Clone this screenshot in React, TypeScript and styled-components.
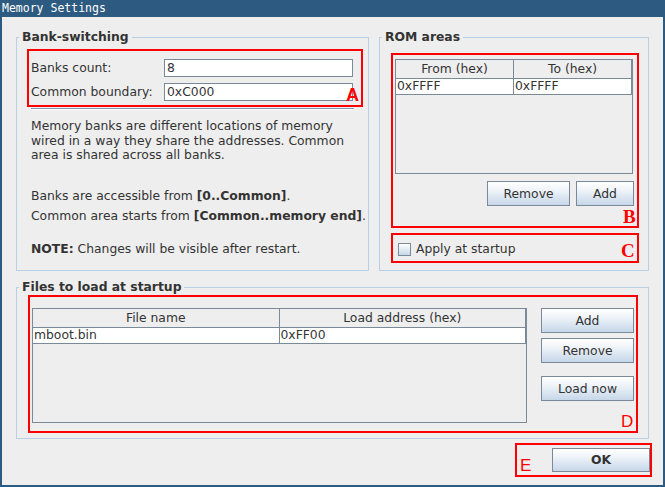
import React from "react";
import styled, { createGlobalStyle } from "styled-components";

const FRAME = "#2c5a80";
const LINE = "#7a8a99";
const GROUP = "#b8cfe5";
const TEXT = "#333333";
const MARK = "#ff0000";
const FS = "12.35px";

const Global = createGlobalStyle`
  html, body { margin: 0; padding: 0; background: #eeeeee; }
  body { font-family: "DejaVu Sans", sans-serif; }
  *, *::before, *::after { box-sizing: border-box; }
`;

const Window = styled.div`
  width: 665px;
  height: 487px;
  display: flex;
  flex-direction: column;
  background: ${FRAME};
  padding: 0 2px 2px 2px;
`;

const TitleBar = styled.div`
  height: 17px;
  line-height: 17px;
  font-family: "DejaVu Sans Mono", monospace;
  font-size: 11.5px;
  color: #ffffff;
  white-space: nowrap;
`;

const Content = styled.div`
  flex: 1;
  background: #eeeeee;
  padding: 13px 11px 0 14px;
  display: flex;
  flex-direction: column;
  font-family: "DejaVu Sans", sans-serif;
  font-size: ${FS};
  color: ${TEXT};
`;

const TopRow = styled.div`
  display: grid;
  grid-template-columns: 353px 270px;
  grid-template-rows: 241px;
  column-gap: 10px;
`;

const Group = styled.fieldset<{ $w?: number }>`
  margin: 0;
  padding: 0;
  min-width: 0;
  border: 1px solid ${GROUP};
  ${(p) => (p.$w ? `width: ${p.$w}px;` : "")}
`;

const GroupTitle = styled.legend`
  margin-left: 2px;
  padding: 0 3px;
  font-weight: bold;
  font-size: ${FS};
  line-height: 15px;
  color: ${TEXT};
`;

const GroupBody = styled.div<{ $pad: string }>`
  display: flex;
  flex-direction: column;
  align-items: flex-start;
  padding: ${(p) => p.$pad};
`;

const Annot = styled.div<{ $w: number; $h?: number }>`
  position: relative;
  width: ${(p) => p.$w}px;
  ${(p) => (p.$h ? `height: ${p.$h}px;` : "")}
  border: 2px solid ${MARK};
  flex-shrink: 0;
`;

const Mark = styled.span<{ $serif?: boolean; $bold?: boolean; $size: number; $x: number; $y: number }>`
  position: absolute;
  left: ${(p) => p.$x}px;
  top: ${(p) => p.$y}px;
  font-family: ${(p) => (p.$serif ? `"Liberation Serif", serif` : `"Liberation Sans", Arial, sans-serif`)};
  font-weight: ${(p) => (p.$bold ? "bold" : "normal")};
  font-size: ${(p) => p.$size}px;
  line-height: ${(p) => p.$size}px;
  color: ${MARK};
  pointer-events: none;
`;

const FormGrid = styled.div`
  display: grid;
  grid-template-columns: 133px 1fr;
  row-gap: 6px;
  align-items: center;
  padding: 8px 8px 4px 2px;
`;

const Label = styled.label`
  white-space: nowrap;
`;

const Field = styled.input`
  height: 18px;
  width: 100%;
  border: 1px solid ${LINE};
  background: #ffffff;
  padding: 0 2px;
  margin: 0;
  font-family: "DejaVu Sans", sans-serif;
  font-size: ${FS};
  color: ${TEXT};
  outline: none;
`;

const Separator = styled.div`
  width: 323px;
  margin: 1px 0 0 4px;
  border-top: 1px solid #8398ae;
  border-bottom: 1px solid #ffffff;
`;

const Info = styled.p<{ $top: number }>`
  margin: ${(p) => p.$top}px 0 0 4px;
  line-height: 14.5px;
  white-space: nowrap;
`;

const TableFrame = styled.div<{ $w: number }>`
  width: ${(p) => p.$w}px;
  height: 115px;
  border: 1px solid ${LINE};
  background: #eeeeee;
  flex-shrink: 0;
`;

const TRow = styled.div<{ $head?: boolean }>`
  display: grid;
  grid-template-columns: 1fr 1fr;
  height: ${(p) => (p.$head ? 19 : 16)}px;
  background: ${(p) => (p.$head ? "#eeeeee" : "#ffffff")};
`;

const TCell = styled.div<{ $head?: boolean }>`
  border-right: 1px solid ${LINE};
  border-bottom: 1px solid ${LINE};
  line-height: ${(p) => (p.$head ? 18 : 15)}px;
  text-align: ${(p) => (p.$head ? "center" : "left")};
  padding-left: ${(p) => (p.$head ? 0 : 1)}px;
  white-space: nowrap;
  overflow: hidden;
`;

const Button = styled.button<{ $w: number; $h?: number; $bold?: boolean }>`
  width: ${(p) => p.$w}px;
  height: ${(p) => p.$h ?? 25}px;
  margin: 0;
  padding: 0;
  border: 1px solid ${LINE};
  border-radius: 0;
  background: linear-gradient(to bottom, #ffffff 0%, #f2f6fa 30%, #c6d7e9 100%);
  font-family: "DejaVu Sans", sans-serif;
  font-size: ${FS};
  font-weight: ${(p) => (p.$bold ? "bold" : "normal")};
  color: ${TEXT};
  flex-shrink: 0;
`;

const ButtonRow = styled.div`
  display: flex;
  justify-content: flex-end;
  gap: 6px;
  margin-top: 7px;
`;

const RomInner = styled.div`
  padding: 4px 3px 0 2px;
  display: flex;
  flex-direction: column;
`;

const CheckRow = styled.label`
  display: flex;
  align-items: center;
  gap: 5px;
  height: 100%;
  padding: 2px 0 0 5px;
`;

const CheckBox = styled.span`
  width: 13px;
  height: 13px;
  border: 1px solid ${LINE};
  background: linear-gradient(to bottom, #ffffff 0%, #e8eff6 40%, #c6d7e9 100%);
`;

const FilesInner = styled.div`
  display: flex;
  align-items: flex-start;
  padding: 11px 2px 0 2px;
`;

const ButtonColumn = styled.div`
  display: flex;
  flex-direction: column;
  margin-left: 14px;
`;

const Spacer = styled.div<{ $h: number }>`
  height: ${(p) => p.$h}px;
`;

const Footer = styled.div`
  display: flex;
  justify-content: flex-end;
  margin-top: 4px;
`;

const FooterBox = styled.div`
  display: flex;
  align-items: center;
  justify-content: flex-end;
  height: 100%;
`;

function Table({ w, cols, row }: { w: number; cols: [string, string]; row: [string, string] }) {
  return (
    <TableFrame $w={w}>
      <TRow $head>
        <TCell $head>{cols[0]}</TCell>
        <TCell $head>{cols[1]}</TCell>
      </TRow>
      <TRow>
        <TCell>{row[0]}</TCell>
        <TCell>{row[1]}</TCell>
      </TRow>
    </TableFrame>
  );
}

export default function App() {
  return (
    <>
      <Global />
      <Window>
        <TitleBar>Memory Settings</TitleBar>
        <Content>
          <TopRow>
            <Group>
              <GroupTitle>Bank-switching</GroupTitle>
              <GroupBody $pad="4px 0 0 10px">
                <Annot $w={336}>
                  <FormGrid>
                    <Label>Banks count:</Label>
                    <Field defaultValue="8" />
                    <Label>Common boundary:</Label>
                    <Field defaultValue="0xC000" />
                  </FormGrid>
                  <Mark $bold $size={18} $x={317} $y={35}>A</Mark>
                </Annot>
                <Separator />
                <Info $top={9}>
                  Memory banks are different locations of memory
                  <br />
                  wired in a way they share the addresses. Common
                  <br />
                  area is shared across all banks.
                </Info>
                <Info $top={26}>
                  Banks are accessible from <b>[0..Common]</b>.
                </Info>
                <Info $top={6}>
                  Common area starts from <b>[Common..memory end]</b>.
                </Info>
                <Info $top={18}>
                  <b>NOTE:</b> Changes will be visible after restart.
                </Info>
              </GroupBody>
            </Group>
            <Group>
              <GroupTitle>ROM areas</GroupTitle>
              <GroupBody $pad="8px 0 0 11px">
                <Annot $w={248} $h={175}>
                  <RomInner>
                    <Table w={238} cols={["From (hex)", "To (hex)"]} row={["0xFFFF", "0xFFFF"]} />
                    <ButtonRow>
                      <Button $w={83}>Remove</Button>
                      <Button $w={58}>Add</Button>
                    </ButtonRow>
                  </RomInner>
                  <Mark $serif $bold $size={19} $x={230} $y={152}>B</Mark>
                </Annot>
                <Spacer $h={5} />
                <Annot $w={248} $h={30}>
                  <CheckRow>
                    <CheckBox />
                    Apply at startup
                  </CheckRow>
                  <Mark $serif $bold $size={19} $x={228} $y={6}>C</Mark>
                </Annot>
              </GroupBody>
            </Group>
          </TopRow>
          <Spacer $h={9} />
          <Group $w={633}>
            <GroupTitle>Files to load at startup</GroupTitle>
            <GroupBody $pad="0 0 5px 11px">
              <Annot $w={610} $h={138}>
                <FilesInner>
                  <Table w={495} cols={["File name", "Load address (hex)"]} row={["mboot.bin", "0xFF00"]} />
                  <ButtonColumn>
                    <Button $w={93}>Add</Button>
                    <Spacer $h={5} />
                    <Button $w={93}>Remove</Button>
                    <Spacer $h={13} />
                    <Button $w={93}>Load now</Button>
                  </ButtonColumn>
                </FilesInner>
                <Mark $size={17} $x={591} $y={116}>D</Mark>
              </Annot>
            </GroupBody>
          </Group>
          <Footer>
            <Annot $w={137} $h={34}>
              <FooterBox>
                <Button $w={98} $h={24} $bold>OK</Button>
              </FooterBox>
              <Mark $size={17} $x={3} $y={12}>E</Mark>
            </Annot>
          </Footer>
        </Content>
      </Window>
    </>
  );
}
